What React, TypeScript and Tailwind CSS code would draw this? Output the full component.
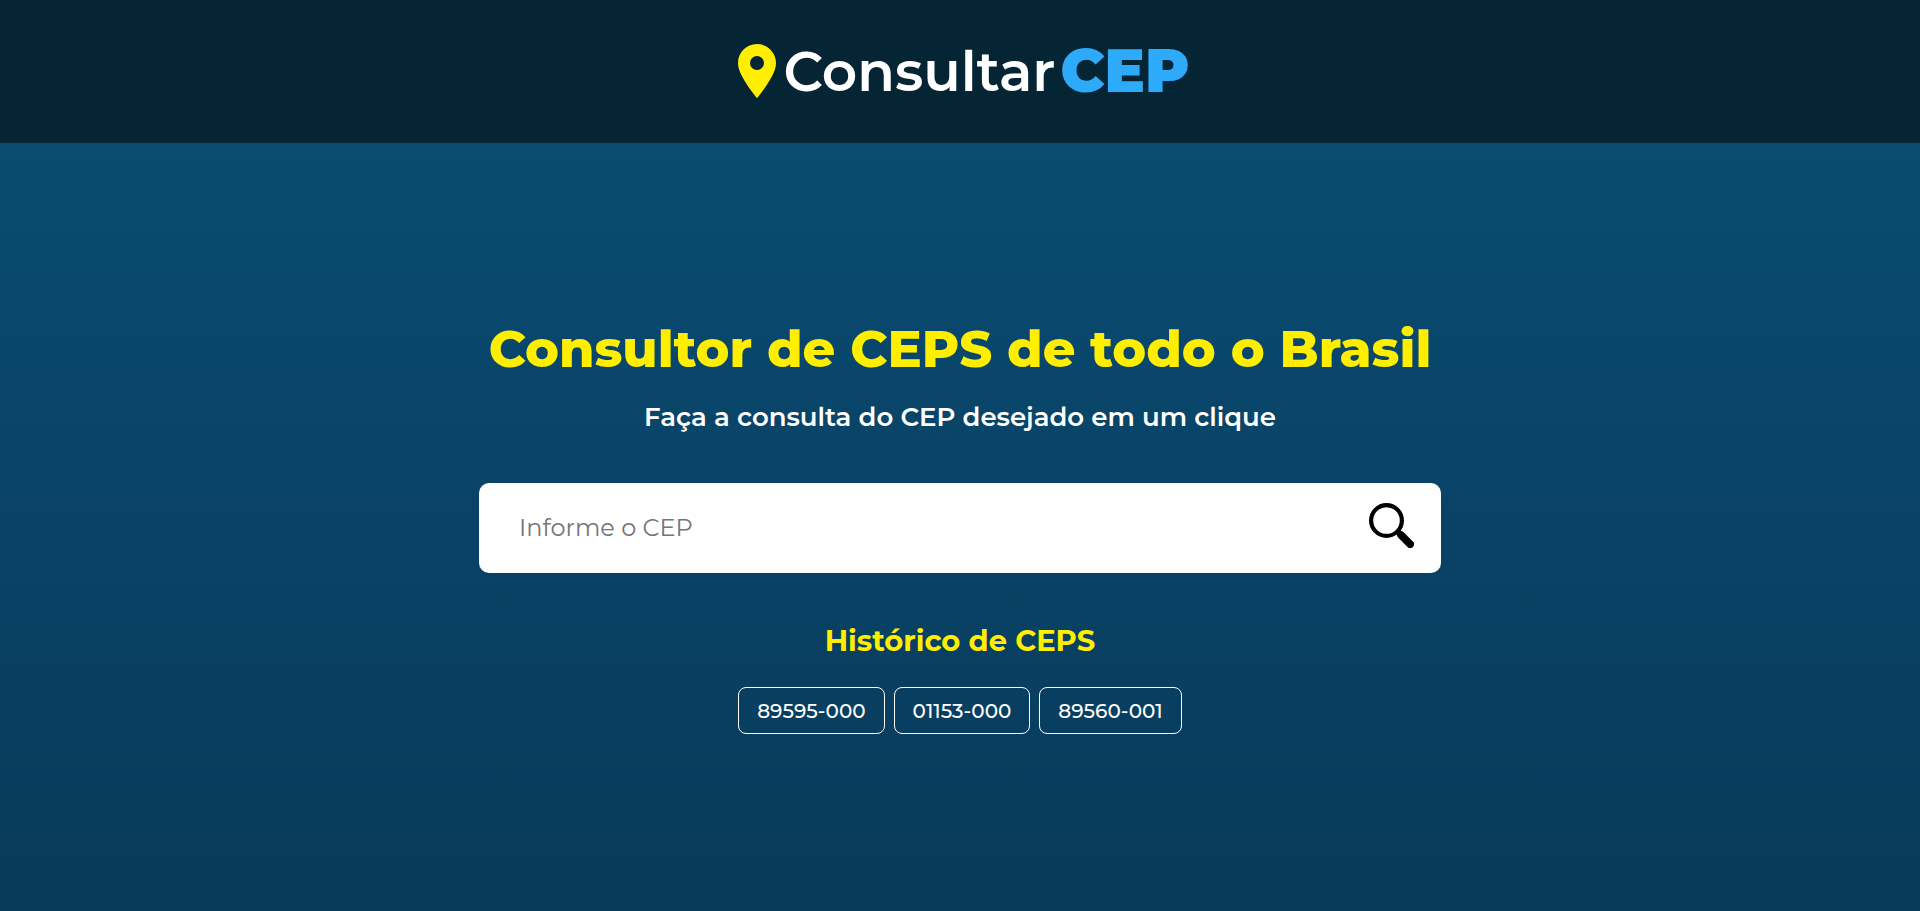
import { useState } from "react";

const cepHistory = ["89595-000", "01153-000", "89560-001"];

function PinIcon() {
  return (
    <svg viewBox="0 0 38 54" className="h-[54px] w-[38px] shrink-0" aria-hidden="true">
      <path
        fill="#ffee00"
        fillRule="evenodd"
        d="M19 0C8.5 0 0 8.4 0 18.900C0 23.300 1.500 27.500 4 32.200C7.800 39.300 13.200 47 18.600 53.700Q19 54.200 19.400 53.700C24.800 47 30.200 39.300 34 32.200C36.500 27.500 38 23.300 38 18.900C38 8.400 29.500 0 19 0ZM19 12A7 7 0 1 1 19 26A7 7 0 1 1 19 12Z"
      />
    </svg>
  );
}

function SearchIcon() {
  return (
    <svg viewBox="0 0 45 45" className="size-[45px]" fill="none" stroke="#000" aria-hidden="true">
      <circle cx="17.500" cy="17.500" r="15.400" strokeWidth="4.200" />
      <path d="M27.500 27.500L33 33" strokeWidth="5.500" />
      <path d="M32 32L41.200 41.200" strokeWidth="7.600" strokeLinecap="round" />
    </svg>
  );
}

export default function App() {
  const [cep, setCep] = useState("");

  return (
    <div className="flex min-h-screen flex-col bg-[#083a5a] font-['Montserrat','Inter',sans-serif]">
      <header className="flex h-[143px] items-center justify-center bg-[#052535] pb-px pl-2">
        <a href="/" className="flex items-center gap-[7px]">
          <PinIcon />
          <span className="flex items-center gap-[5px] leading-none">
            <span className="text-[55px] font-semibold text-white">Consultar</span>
            <span className="text-[60px] font-black text-[#2eaafa]">CEP</span>
          </span>
        </a>
      </header>

      <main className="flex flex-1 flex-col items-center justify-center bg-linear-to-b from-[#0a4b72] to-[#083a5a] px-4">
        <h1 className="text-center text-[51px] leading-[58px] font-extrabold text-[#ffee00]">
          Consultor de CEPS de todo o Brasil
        </h1>
        <p className="mt-6 text-center text-[26px] leading-[31px] font-semibold text-white">
          Faça a consulta do CEP desejado em um clique
        </p>

        <form
          className="mt-[50px] flex h-[90px] w-full max-w-[962px] items-center rounded-[10px] bg-white pr-[27px] pl-10"
          onSubmit={(event) => event.preventDefault()}
        >
          <input
            type="text"
            aria-label="Informe o CEP"
            placeholder="Informe o CEP"
            value={cep}
            onChange={(event) => setCep(event.target.value)}
            className="h-full min-w-0 flex-1 bg-transparent pb-0.5 text-[24px] text-black outline-none placeholder:text-[#757575]"
          />
          <button type="submit" aria-label="Buscar" className="mb-1.5 shrink-0 cursor-pointer">
            <SearchIcon />
          </button>
        </form>

        <section className="mt-[50px] flex flex-col items-center">
          <h2 className="text-[29px] leading-[35px] font-bold text-[#ffee00]">Histórico de CEPS</h2>
          <ul className="mt-[29px] flex flex-wrap justify-center gap-[9px]">
            {cepHistory.map((item) => (
              <li key={item}>
                <button
                  type="button"
                  onClick={() => setCep(item)}
                  className="h-[47px] cursor-pointer rounded-lg border border-white px-[18px] text-[20px] font-medium text-white"
                >
                  {item}
                </button>
              </li>
            ))}
          </ul>
        </section>
      </main>
    </div>
  );
}
